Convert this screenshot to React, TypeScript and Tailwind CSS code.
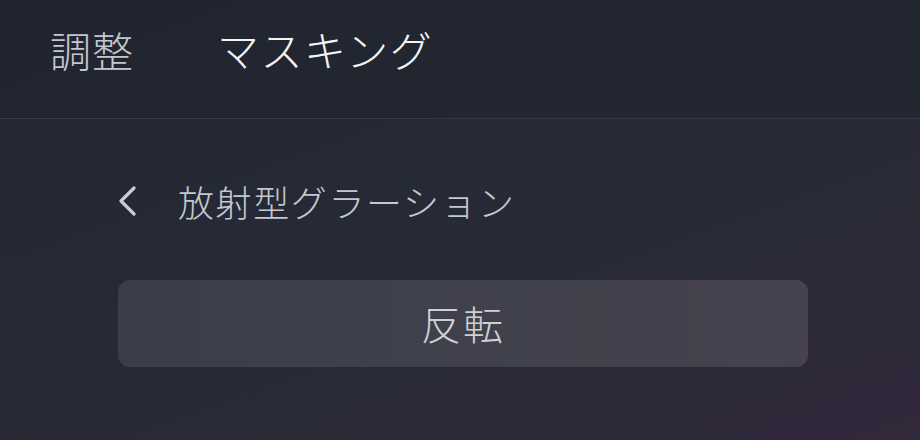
import React from "react";

export default function App() {
  return (
    <div
      className="w-[920px] h-[440px] overflow-hidden bg-[linear-gradient(160deg,#222632_0%,#262a36_45%,#2b2a38_75%,#32283b_100%)]"
      style={{ fontFamily: '"Noto Sans CJK JP", "Noto Sans", sans-serif' }}
    >
      <div className="h-[119px] flex items-center pl-[50px] pb-[20px] bg-[#1e222d]/40 border-b border-[#363a47]">
        <span className="text-[41px] leading-none font-light text-[#c4c7cc] tracking-[1px]">調整</span>
        <span className="ml-[83px] text-[42px] leading-none font-light text-[#f4f4f5] tracking-[1.5px]">マスキング</span>
      </div>
      <div className="pl-[118px] pt-[62px]">
        <div className="flex items-center h-[40px]">
          <svg width="19" height="30" viewBox="0 0 19 30" fill="none" className="shrink-0">
            <path d="M16 2 L3 15 L16 28" stroke="#c9ccd1" strokeWidth="3.2" strokeLinecap="round" strokeLinejoin="round" />
          </svg>
          <span className="ml-[41px] text-[36px] leading-none font-light text-[#c4c7cc] tracking-[1.6px]">放射型グラーション</span>
        </div>
        <div className="mt-[59px] w-[690px] h-[87px] rounded-[12px] bg-[linear-gradient(90deg,#3b3e49_0%,#40414c_60%,#47414f_100%)] flex items-center justify-center">
          <span className="text-[40px] leading-none font-light text-[#cfd0d4] pb-[2px] tracking-[2px]">反転</span>
        </div>
      </div>
    </div>
  );
}
